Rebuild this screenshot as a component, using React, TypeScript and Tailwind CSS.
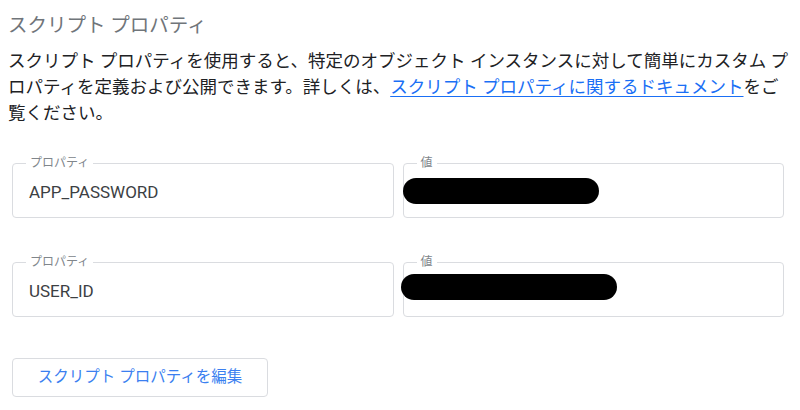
import React from "react";

interface PropertyRowProps {
  name: string;
  redact: string;
}

const labelFont = { fontFamily: "Roboto, 'Noto Sans CJK JP', sans-serif" };

const PropertyRow: React.FC<PropertyRowProps> = ({ name, redact }) => {
  return (
    <div className="grid grid-cols-2 gap-[9px]">
      <fieldset className="rounded-[4px] border border-[#dadce0] p-0 m-0 min-w-0">
        <legend className="ml-[13px] px-[4px] text-[12px] leading-[16px] text-[#80868b]">
          プロパティ
        </legend>
        <div className="flex h-[40px] items-center px-4 pt-[4px] text-[17px] text-[#3c4043]">
          {name}
        </div>
        <div className="h-[6px]" />
      </fieldset>
      <fieldset className="rounded-[4px] border border-[#dadce0] p-0 m-0 min-w-0">
        <legend className="ml-[13px] px-[4px] text-[12px] leading-[16px] text-[#80868b]">
          値
        </legend>
        <div className="flex h-[40px] items-center">
          <span className={`block h-[26px] rounded-full bg-black ${redact}`} />
        </div>
        <div className="h-[6px]" />
      </fieldset>
    </div>
  );
};

export default function App() {
  return (
    <div className="h-[410px] w-[800px] bg-white px-2" style={labelFont}>
      <h2 className="mt-[12px] text-[19.5px] font-normal leading-[28px] text-[#70757a]">
        スクリプト プロパティ
      </h2>
      <p className="mt-[8px] w-[787px] text-[17.5px] leading-[26px] text-[#202124]">
        スクリプト プロパティを使用すると、特定のオブジェクト インスタンスに対して簡単にカスタム プロパティを定義および公開できます。詳しくは、
        <a href="#" className="text-[#1a6ff5] underline underline-offset-[3px]">
          スクリプト プロパティに関するドキュメント
        </a>
        をご覧ください。
      </p>
      <div className="ml-1 mt-[29px] flex w-[772px] flex-col gap-[36px]">
        <PropertyRow name="APP_PASSWORD" redact="w-[196px] -ml-[1px]" />
        <PropertyRow name="USER_ID" redact="w-[216px] -ml-[3px] -mt-[6px]" />
      </div>
      <button
        type="button"
        className="ml-1 mt-[41px] h-[39px] w-[256px] rounded-[4px] border border-[#dadce0] bg-white text-[15.5px] text-[#3b7ff0]"
      >
        スクリプト プロパティを編集
      </button>
    </div>
  );
}
